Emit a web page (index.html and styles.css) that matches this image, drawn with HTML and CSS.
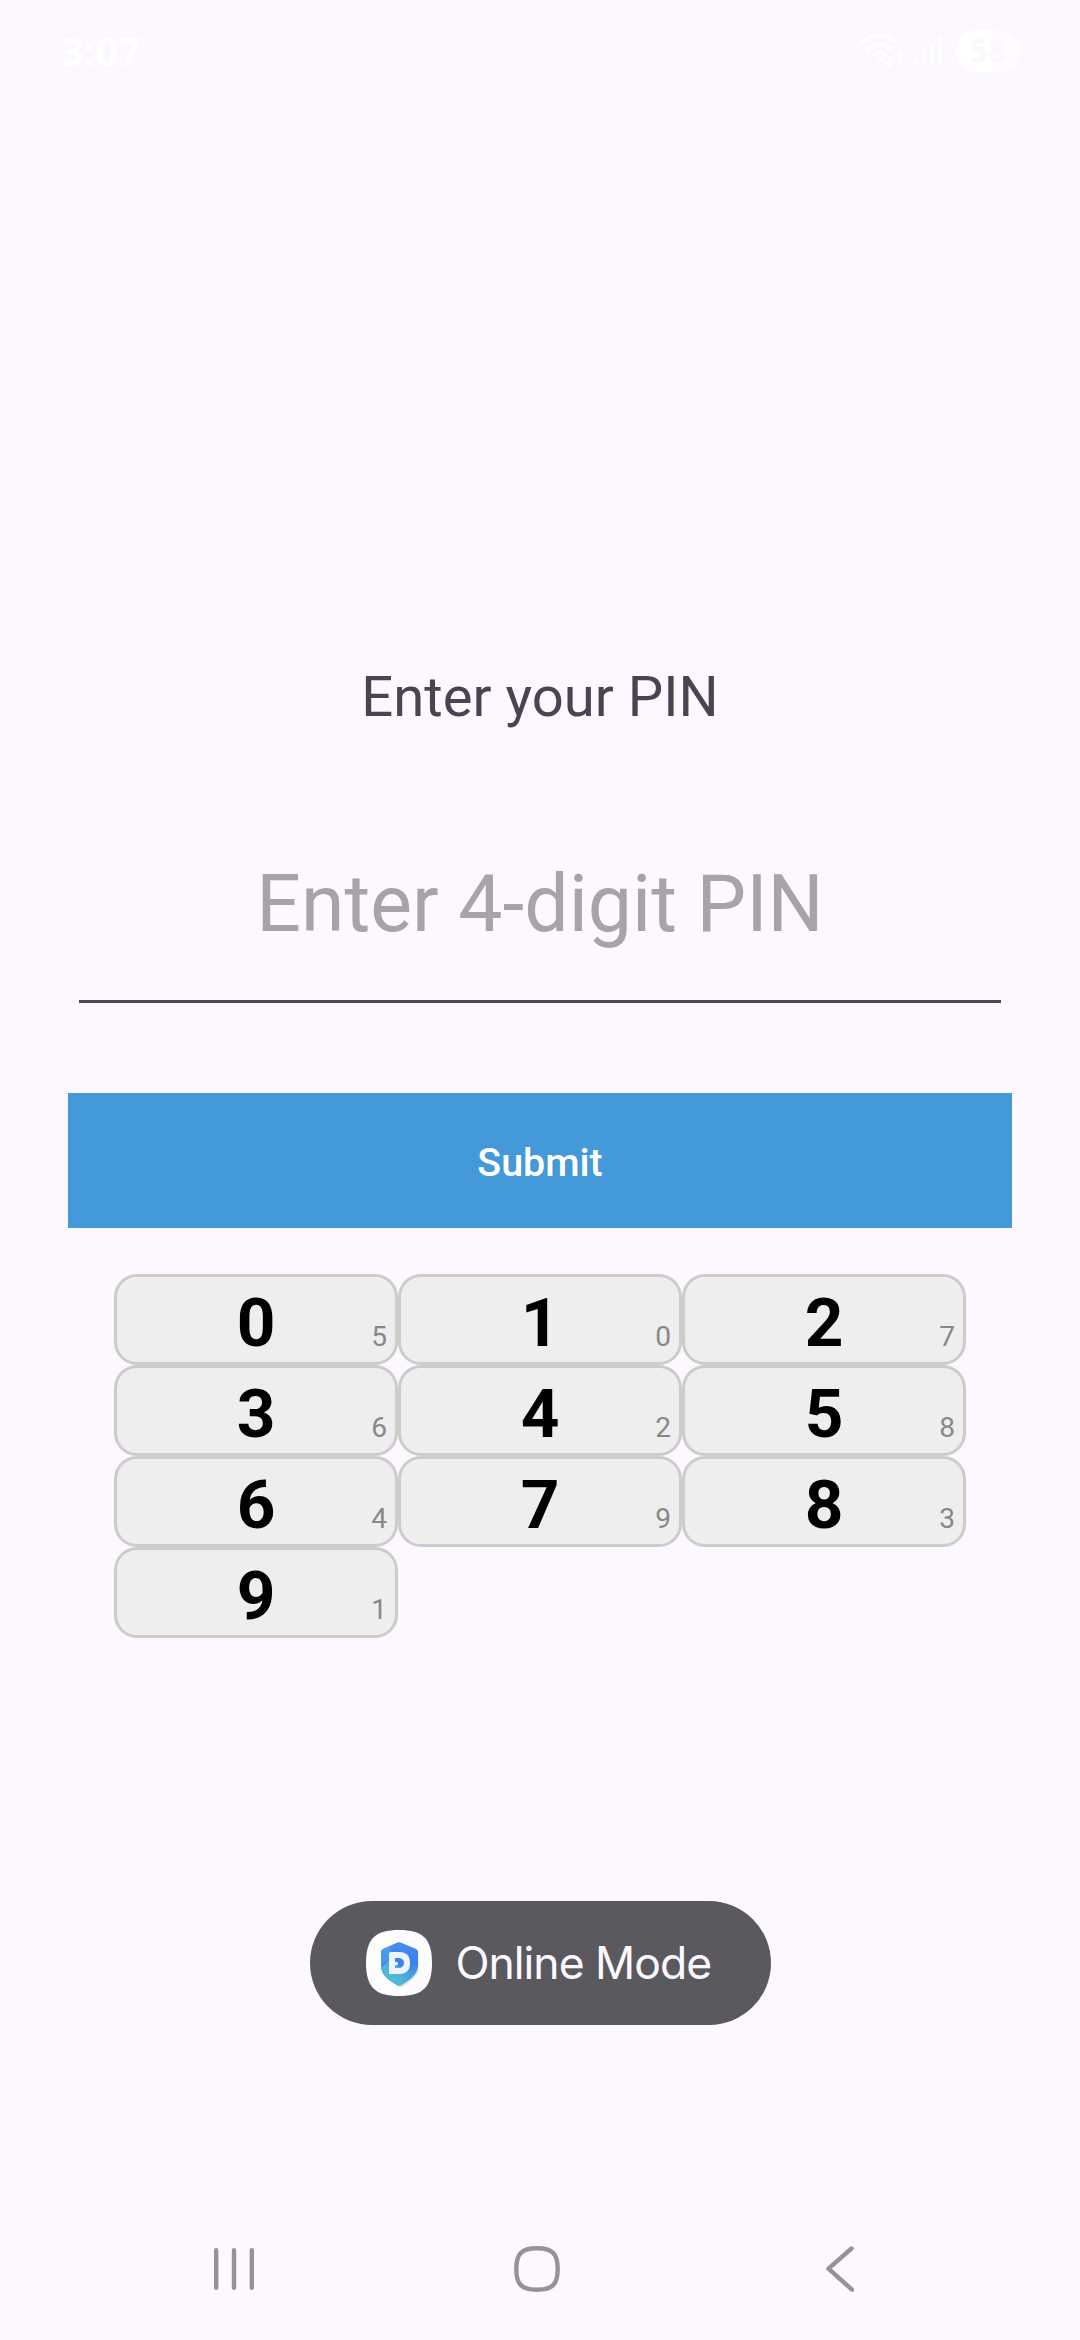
FILE: index.html
```html
<!DOCTYPE html>
<html lang="en">
<head>
<meta charset="utf-8">
<title>Enter your PIN</title>
<link rel="stylesheet" href="styles.css">
</head>
<body>
<div class="screen">
  <header class="status">
    <span class="clock">3:07</span>
    <div class="indicators">
      <svg class="wifi" width="46" height="34" viewBox="0 0 46 34" fill="none" stroke="#fff" stroke-width="4" stroke-linecap="round">
        <path d="M2.500 8.500C12-.5 26-.5 36 8.500M8 15C14.500 9 24 9 30.500 15M14 20.500C17 18 21.500 18 24.500 20.500"/>
        <circle cx="19.500" cy="25.500" r="2" fill="#fff" stroke="none"/>
        <path stroke-width="2.500" d="M29 23v9M25.500 28.500 29 32l3.500-3.500M40.500 29V18.500M37 22l3.500-3.500L44 22"/>
      </svg>
      <svg class="signal" width="28" height="30" viewBox="0 0 28 30" stroke="#fff" stroke-width="4" stroke-linecap="round">
        <path d="M2.500 25v1M10 15v11M18 8.500V26M25.500 3v23"/>
      </svg>
      <div class="battery">58</div>
    </div>
  </header>

  <main class="pin">
    <h1 class="title">Enter your PIN</h1>
    <div class="field">Enter 4-digit PIN</div>
    <button class="submit" type="button">Submit</button>
    <div class="keypad">
      <div class="key"><b>0</b><small>5</small></div>
      <div class="key"><b>1</b><small>0</small></div>
      <div class="key"><b>2</b><small>7</small></div>
      <div class="key"><b>3</b><small>6</small></div>
      <div class="key"><b>4</b><small>2</small></div>
      <div class="key"><b>5</b><small>8</small></div>
      <div class="key"><b>6</b><small>4</small></div>
      <div class="key"><b>7</b><small>9</small></div>
      <div class="key"><b>8</b><small>3</small></div>
      <div class="key"><b>9</b><small>1</small></div>
    </div>
  </main>

  <div class="toast">
    <svg width="66" height="66" viewBox="0 0 66 66">
      <defs>
        <linearGradient id="shield" x1="0" y1="0" x2="0" y2="1">
          <stop offset="0" stop-color="#438df0"/>
          <stop offset=".5" stop-color="#3a82e8"/>
          <stop offset="1" stop-color="#4fbfd2"/>
        </linearGradient>
        <linearGradient id="facet" x1="0" y1="1" x2="1" y2="0">
          <stop offset="0" stop-color="#55c4d3"/>
          <stop offset=".45" stop-color="#4db4d8"/>
          <stop offset="1" stop-color="#3b83ea"/>
        </linearGradient>
        <filter id="soft" x="-30%" y="-30%" width="160%" height="160%"><feGaussianBlur stdDeviation="1.300"/></filter>
      </defs>
      <path fill="#fdfdfe" d="M33 0C57 0 66 9 66 33S57 66 33 66 0 57 0 33 9 0 33 0Z"/>
      <path fill="#9fb0cc" opacity=".6" filter="url(#soft)" d="M35 14l17 7v16c0 8-7 14-17 20-10-6-17-12-17-20V21Z"/>
      <path fill="url(#shield)" d="M31.500 12.600q1.500-.8 3 0l15.500 6.400q2 .8 2 3V35c0 9-7 14.500-17 20q-2 1-4 0C21 49.500 15 44 15 35V22q0-2.200 2-3Z"/>
      <path fill="url(#facet)" d="M15 38 24 29 46 47Q41 51.500 35 55q-2 1-4 0C22 50 16 45 15 38Z"/>
      <path fill="#5ba8f5" opacity=".5" d="M15 36V22q0-2.200 2-3l8-3.300V27Z"/>
      <path fill="#eef4fc" fill-rule="evenodd" d="M25 22h8q11 0 11 11T33 44H23V24q0-2 2-2ZM29 28v4q3-1 3 1.500T29 35v3h3q6 0 6-5t-6-5Z"/>
    </svg>
    <span>Online Mode</span>
  </div>

  <nav class="navbar">
    <svg width="40" height="46" viewBox="0 0 40 46"><path d="M2.200 4.200v37.600M20 4.200v37.600M37.800 4.200v37.600"/></svg>
    <svg class="home" width="46" height="46" viewBox="0 0 46 46"><path d="M23 2.300C38.500 2.300 43.700 7.500 43.700 23S38.500 43.700 23 43.700 2.300 38.500 2.300 23 7.500 2.300 23 2.300Z"/></svg>
    <svg width="28" height="46" viewBox="0 0 28 46"><path d="M25.500 2.500 2.500 22.700 26 43.700"/></svg>
  </nav>
</div>
</body>
</html>
```
FILE: styles.css
```css
* { box-sizing: border-box; }

body {
  margin: 0;
  background: #fdf8ff;
  font-family: Roboto, "Noto Sans", sans-serif;
}

.screen {
  width: 1080px;
  height: 2340px;
  display: flex;
  flex-direction: column;
  align-items: center;
  overflow: hidden;
}

.status {
  width: 100%;
  height: 102px;
  padding: 0 60px 0 61px;
  display: flex;
  align-items: center;
  justify-content: space-between;
  color: #fff;
}

.clock {
  font: 700 40px/48px "Open Sans", sans-serif;
}

.indicators {
  display: flex;
  align-items: center;
}

.signal { margin: 0 14px 0 8px; }

.battery {
  width: 64px;
  height: 42px;
  border-radius: 21px;
  background: linear-gradient(90deg, #fff 57%, #fefcff 57%);
  color: #fcf8fd;
  font: 700 32px/40px "Open Sans", sans-serif;
  text-align: center;
}

.pin {
  width: 944px;
  height: 1799px;
  padding-top: 562px;
  display: flex;
  flex-direction: column;
  align-items: center;
}

.title {
  margin: 0;
  color: #49454f;
  font-size: 56.25px;
  font-weight: 400;
  line-height: 66px;
}

.field {
  width: 922px;
  height: 145px;
  margin-top: 128px;
  border-bottom: 3px solid #4d4953;
  color: #a8a3a9;
  font-size: 78.75px;
  line-height: 92px;
  text-align: center;
}

.submit {
  width: 100%;
  height: 135px;
  margin-top: 90px;
  padding: 4px 0 0;
  border: 0;
  background: #4499d9;
  color: #fff;
  font: 500 39.375px/46px Roboto, sans-serif;
}

.keypad {
  width: 852px;
  margin-top: 46px;
  display: grid;
  grid-template-columns: repeat(3, 1fr);
  grid-auto-rows: 91px;
}

.key {
  padding: 6px 8px 0;
  border: 3px solid #ccc;
  border-radius: 23px;
  background: #eee;
  display: grid;
  grid-template-columns: 1fr auto 1fr;
  align-items: baseline;
  line-height: 79px;
}

.key b {
  grid-column: 2;
  color: #000;
  font-size: 67.5px;
}

.key small {
  color: #888;
  font-size: 28.125px;
  line-height: 33px;
  text-align: right;
}

.toast {
  width: 461px;
  height: 124px;
  padding-left: 56px;
  border-radius: 62px;
  background: #5a595e;
  color: #fcf8ff;
  display: flex;
  align-items: center;
  gap: 24px;
  font: 400 44.500px/54px Inter, sans-serif;
  letter-spacing: -1px;
  white-space: nowrap;
}

.navbar {
  width: 100%;
  margin-top: 221px;
  padding: 0 226px 0 214px;
  display: flex;
  justify-content: space-between;
}

.home { margin-right: 7px; }

.navbar path {
  fill: none;
  stroke: #979297;
  stroke-width: 4.4px;
  stroke-linecap: round;
  stroke-linejoin: round;
}
```
